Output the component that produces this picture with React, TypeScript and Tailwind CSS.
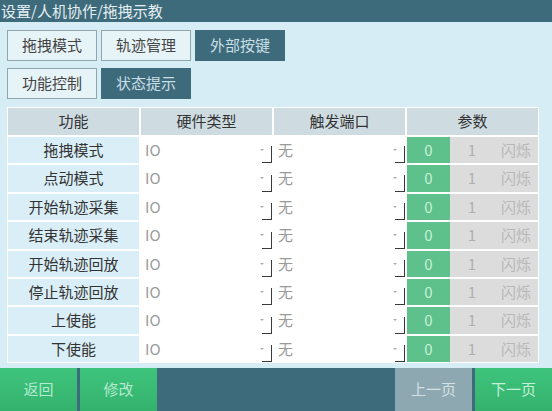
import React from "react";

const rows = ["拖拽模式", "点动模式", "开始轨迹采集", "结束轨迹采集", "开始轨迹回放", "停止轨迹回放", "上使能", "下使能"];

function SelectCell({ value }: { value: string }) {
  return (
    <div className="relative bg-white h-full flex items-center pl-[4px] text-[#9a9a9a] text-[15px]">
      <span>{value}</span>
      <span className="absolute right-[8px] top-[12px] w-0 h-0 border-l-[2px] border-r-[2px] border-t-[2px] border-l-transparent border-r-transparent border-t-[#aaaaaa]" />
      <span className="absolute right-0 bottom-0 w-[10px] h-[17px] border-r-[1.5px] border-b-[1.5px] border-[#3a3a3a]" />
    </div>
  );
}

function Tab({ label, active }: { label: string; active?: boolean }) {
  return (
    <div
      className={
        "w-[90px] h-[31px] flex items-center justify-center text-[15px] " +
        (active
          ? "bg-[#3e6b7b] text-[#c9dfe6]"
          : "bg-[#e6f3f7] border-[1.5px] border-[#8fa6ad] text-[#444]")
      }
    >
      {label}
    </div>
  );
}

export default function App() {
  return (
    <div
      className="w-[552px] h-[411px] flex flex-col bg-[#d6edf5] overflow-hidden"
      style={{ fontFamily: '"Noto Sans CJK SC", "Noto Sans", sans-serif' }}
    >
      <div className="h-[22px] bg-[#3e6b7b] text-[#e4eff3] text-[15px] leading-[22px] pl-[1px]">
        设置/人机协作/拖拽示教
      </div>
      <div className="pt-[8px] px-[7px] flex flex-col gap-[7px]">
        <div className="flex gap-[4px]">
          <Tab label="拖拽模式" />
          <Tab label="轨迹管理" />
          <Tab label="外部按键" active />
        </div>
        <div className="flex gap-[4px]">
          <Tab label="功能控制" />
          <Tab label="状态提示" active />
        </div>
      </div>
      <div className="mt-[8px] ml-[7px] w-[532px] bg-white p-[1px] grid grid-cols-[131px_131px_131px_131px] grid-rows-[27px_repeat(8,26.4px)] gap-[2px] text-[15px]">
        <div className="bg-[#cedce2] flex items-center justify-center text-[#333]">功能</div>
        <div className="bg-[#cedce2] flex items-center justify-center text-[#333]">硬件类型</div>
        <div className="bg-[#cedce2] flex items-center justify-center text-[#333]">触发端口</div>
        <div className="bg-[#cedce2] flex items-center justify-center text-[#333]">参数</div>
        {rows.map((r, i) => (
          <React.Fragment key={i}>
            <div className="bg-[#d9eef6] flex items-center justify-center text-[#333]">{r}</div>
            <SelectCell value="IO" />
            <SelectCell value="无" />
            <div className="flex">
              <div className="w-[43px] bg-[#5ec08a] text-[#c8f0d9] flex items-center justify-center">0</div>
              <div className="flex-1 bg-[#dcdcdc] text-[#b0b0b0] flex items-center justify-center">1</div>
              <div className="flex-1 bg-[#dcdcdc] text-[#b8b8b8] flex items-center justify-center">闪烁</div>
            </div>
          </React.Fragment>
        ))}
      </div>
      <div className="mt-auto h-[43px] bg-[#3e6b7b] flex text-[15px]">
        <div className="w-[77px] bg-gradient-to-b from-[#3fc47c] to-[#34b26d] text-[#b3ead0] flex items-center justify-center">返回</div>
        <div className="w-[77px] ml-[3px] bg-gradient-to-b from-[#3fc47c] to-[#34b26d] text-[#b3ead0] flex items-center justify-center">修改</div>
        <div className="flex-1" />
        <div className="w-[77px] bg-[#8ea8b1] text-[#d3e0e4] flex items-center justify-center">上一页</div>
        <div className="w-[77px] ml-[3px] bg-gradient-to-b from-[#3fc47c] to-[#34b26d] text-[#c4f0da] flex items-center justify-center">下一页</div>
      </div>
    </div>
  );
}
